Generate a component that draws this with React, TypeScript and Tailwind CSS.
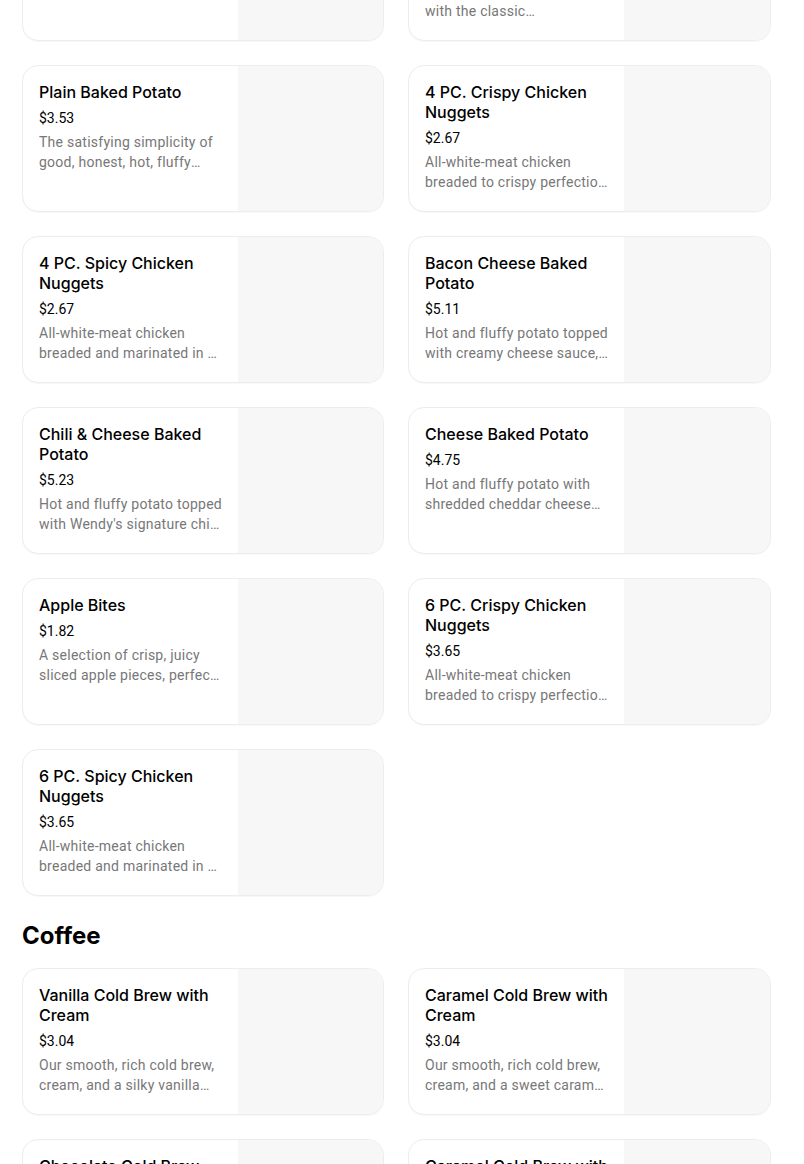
type Item = { name: string; price: string; desc: string };

const sides: Item[] = [
  { name: "Jr. Cheeseburger", price: "$2.29", desc: "Fresh beef and American cheese, topped with the classic fixings." },
  { name: "Sour Cream & Chive Baked Potato", price: "$4.29", desc: "Hot and fluffy potato topped with the classic accompaniments of sour cream and chives." },
  { name: "Plain Baked Potato", price: "$3.53", desc: "The satisfying simplicity of good, honest, hot, fluffy baked potato." },
  { name: "4 PC. Crispy Chicken Nuggets", price: "$2.67", desc: "All-white-meat chicken breaded to crispy perfection and served with your favorite sauce." },
  { name: "4 PC. Spicy Chicken Nuggets", price: "$2.67", desc: "All-white-meat chicken breaded and marinated in a fiery blend of peppers." },
  { name: "Bacon Cheese Baked Potato", price: "$5.11", desc: "Hot and fluffy potato topped with creamy cheese sauce, shredded cheddar and bacon." },
  { name: "Chili & Cheese Baked Potato", price: "$5.23", desc: "Hot and fluffy potato topped with Wendy's signature chili and shredded cheddar." },
  { name: "Cheese Baked Potato", price: "$4.75", desc: "Hot and fluffy potato with shredded cheddar cheese and a warm cheese sauce." },
  { name: "Apple Bites", price: "$1.82", desc: "A selection of crisp, juicy sliced apple pieces, perfect for snacking." },
  { name: "6 PC. Crispy Chicken Nuggets", price: "$3.65", desc: "All-white-meat chicken breaded to crispy perfection and served with your favorite sauce." },
  { name: "6 PC. Spicy Chicken Nuggets", price: "$3.65", desc: "All-white-meat chicken breaded and marinated in a fiery blend of peppers." },
];

const coffee: Item[] = [
  { name: "Vanilla Cold Brew with Cream", price: "$3.04", desc: "Our smooth, rich cold brew, cream, and a silky vanilla flavor over ice." },
  { name: "Caramel Cold Brew with Cream", price: "$3.04", desc: "Our smooth, rich cold brew, cream, and a sweet caramel flavor over ice." },
  { name: "Chocolate Cold Brew with Cream", price: "$3.04", desc: "Our smooth, rich cold brew, cream, and a chocolate flavor over ice." },
  { name: "Caramel Cold Brew with Cream (Large)", price: "$3.54", desc: "Our smooth, rich cold brew, cream, and a sweet caramel flavor over ice." },
];

function Card({ item }: { item: Item }) {
  return (
    <div className="flex h-[147px] overflow-hidden rounded-2xl border border-[#ededed] bg-white shadow-[0_1px_1px_rgba(0,0,0,0.03)]">
      <div className="flex w-[215px] shrink-0 flex-col px-4 pt-4">
        <div className="line-clamp-2 text-[16px] font-medium leading-5 text-black">{item.name}</div>
        <div className="mt-[6px] font-['Roboto',sans-serif] text-[14px] leading-5 text-black">{item.price}</div>
        <div className="mt-1 line-clamp-2 font-['Roboto',sans-serif] text-[14px] leading-5 tracking-[0.25px] text-[#777777]">{item.desc}</div>
      </div>
      <div className="flex-1 bg-[#f7f7f7]" />
    </div>
  );
}

function Grid({ items }: { items: Item[] }) {
  return (
    <div className="grid grid-cols-[362px_363px] gap-x-6 gap-y-6">
      {items.map((it) => (
        <Card key={it.name} item={it} />
      ))}
    </div>
  );
}

export default function App() {
  return (
    <div className="h-[1164px] overflow-hidden bg-white font-['Inter',sans-serif]">
      <div className="-mt-[106px] pl-[22px]">
        <Grid items={sides} />
        <h2 className="mt-6 mb-4 text-[24px] font-bold leading-8 text-black">Coffee</h2>
        <Grid items={coffee} />
      </div>
    </div>
  );
}
